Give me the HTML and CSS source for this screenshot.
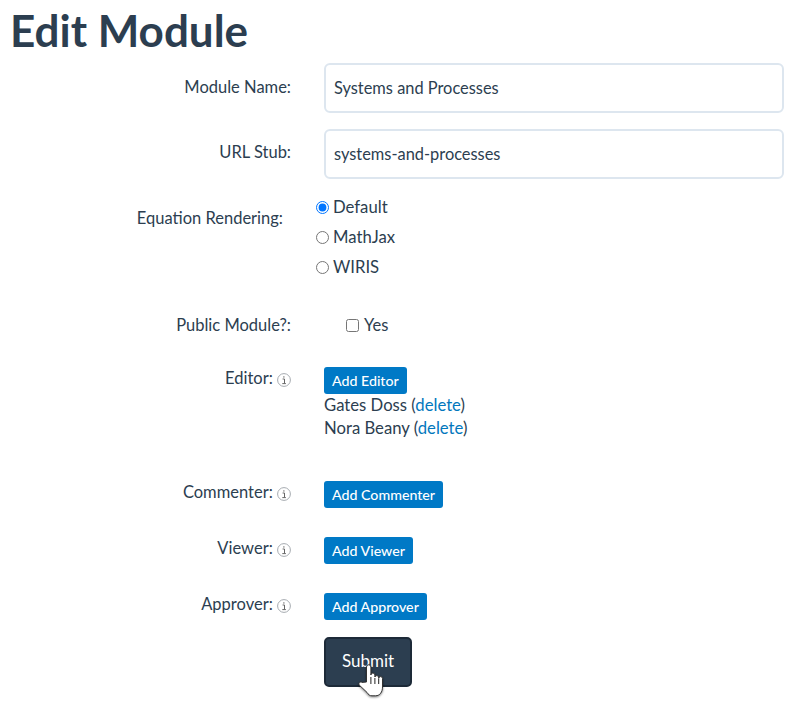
FILE: index.html
```html
<!DOCTYPE html>
<html lang="en">
<head>
    <meta charset="UTF-8">
    <meta name="viewport" content="width=device-width, initial-scale=1.0">
    <title>Edit Module</title>
    <link rel="stylesheet" href="styles.css">
</head>
<body>
    <h1>Edit Module</h1>
    <form class="module-form">
        <div class="row row-name">
            <label class="row-label">Module Name:</label>
            <div class="row-field"><input class="text-input" type="text" value="Systems and Processes"></div>
        </div>
        <div class="row row-stub">
            <label class="row-label">URL Stub:</label>
            <div class="row-field"><input class="text-input" type="text" value="systems-and-processes"></div>
        </div>
        <div class="row row-render">
            <label class="row-label">Equation Rendering:</label>
            <div class="row-field radio-group">
                <label class="radio-item"><input type="radio" name="render" checked>Default</label>
                <label class="radio-item"><input type="radio" name="render">MathJax</label>
                <label class="radio-item"><input type="radio" name="render">WIRIS</label>
            </div>
        </div>
        <div class="row row-public">
            <label class="row-label">Public Module?:</label>
            <div class="row-field"><label class="check-item"><input type="checkbox">Yes</label></div>
        </div>
        <div class="row row-editor">
            <label class="row-label">Editor:
                <svg class="info-icon" viewBox="0 0 14 14"><circle cx="7" cy="7" r="6.4"/><path d="M5.6 6h1.900v4.400M5.300 10.600h3.600M6.900 3.200v1.500"/></svg>
            </label>
            <div class="row-field">
                <a class="add-btn" href="#">Add Editor</a>
                <div class="people">
                    <div class="person">Gates Doss (<a href="#">delete</a>)</div>
                    <div class="person">Nora Beany (<a href="#">delete</a>)</div>
                </div>
            </div>
        </div>
        <div class="row row-commenter">
            <label class="row-label">Commenter:
                <svg class="info-icon" viewBox="0 0 14 14"><circle cx="7" cy="7" r="6.4"/><path d="M5.6 6h1.900v4.400M5.300 10.600h3.600M6.900 3.200v1.500"/></svg>
            </label>
            <div class="row-field"><a class="add-btn" href="#">Add Commenter</a></div>
        </div>
        <div class="row row-viewer">
            <label class="row-label">Viewer:
                <svg class="info-icon" viewBox="0 0 14 14"><circle cx="7" cy="7" r="6.4"/><path d="M5.6 6h1.900v4.400M5.300 10.600h3.600M6.900 3.200v1.500"/></svg>
            </label>
            <div class="row-field"><a class="add-btn" href="#">Add Viewer</a></div>
        </div>
        <div class="row row-approver">
            <label class="row-label">Approver:
                <svg class="info-icon" viewBox="0 0 14 14"><circle cx="7" cy="7" r="6.4"/><path d="M5.6 6h1.900v4.400M5.300 10.600h3.600M6.900 3.200v1.500"/></svg>
            </label>
            <div class="row-field"><a class="add-btn" href="#">Add Approver</a></div>
        </div>
        <div class="row">
            <div class="row-label"></div>
            <div class="row-field submit-wrap">
                <button class="submit-btn" type="button">Submit</button>
                <!-- mouse pointer sitting on the button -->
                <svg class="hand-cursor" viewBox="0 0 28 35">
                    <path class="hand-fill" d="M10.500 19V4a2.200 2.200 0 0 1 4.400 0V12a2 2 0 0 1 4 0V14a2 2 0 0 1 3.800 0V15.500a1.900 1.900 0 0 1 3.800 0V24c0 5-2.600 8.800-7 8.800h-3.500c-2.400 0-3.600-1.200-5-3.400L3.200 22c-1.100-1.800 1-3.800 2.800-2.600z"/>
                    <path class="hand-line" d="M14.900 14v7M18.900 15v6M22.700 16v5"/>
                </svg>
            </div>
        </div>
    </form>
</body>
</html>
```

FILE: styles.css
```css
body {
    margin: 0;
    font-family: Lato, "Open Sans", sans-serif;
    font-size: 16.5px;
    line-height: 23px;
    color: #2c3e50;
    background: white;
}
h1 {
    margin: 0;
    padding: 4px 0 0 10px;
    height: 59px;
    font-size: 44px;
    line-height: 52px;
    font-weight: 700;
}
.module-form {
    padding-bottom: 17px;
}
/* Form rows, label column on the left */
.row {
    display: grid;
    grid-template-columns: 291px 460px;
    column-gap: 33px;
}
.row-label {
    text-align: right;
}
.row-name {
    margin-bottom: 16px;
}
.row-name .row-label {
    padding-top: 13px;
}
.row-stub {
    margin-bottom: 13px;
}
.row-stub .row-label {
    padding-top: 12px;
}
.row-render {
    margin-bottom: 28px;
}
.row-render .row-label {
    padding: 15px 8px 0 0;
}
.row-public {
    margin-bottom: 27px;
}
.row-public .row-label {
    padding-top: 4px;
}
.row-editor {
    margin-bottom: 41px;
}
.row-commenter, .row-viewer {
    margin-bottom: 29px;
}
.row-approver {
    margin-bottom: 17px;
}
.text-input {
    display: block;
    box-sizing: border-box;
    width: 460px;
    height: 50px;
    padding: 0 8px 2px;
    border: 2px solid #dde6ef;
    border-radius: 6px;
    font-family: inherit;
    font-size: 16.4px;
    color: #2c3e50;
}
.radio-group {
    margin-left: -8px;
    font-size: 16.7px;
}
.radio-item {
    display: flex;
    align-items: center;
    height: 30px;
}
.radio-item input {
    margin: 0 4px 0 0;
}
.check-item {
    display: flex;
    align-items: center;
    height: 30px;
    margin-left: 22px;
}
.check-item input {
    margin: 0 5px 0 0;
}
.info-icon {
    width: 14px;
    height: 14px;
    vertical-align: -3px;
    fill: none;
    stroke: #a6abb0;
    stroke-width: 1;
}
.info-icon path {
    stroke: #666;
}
.add-btn {
    display: inline-block;
    height: 27px;
    padding: 0 8px;
    background-color: #0079c6;
    border-radius: 3px;
    color: white;
    font-size: 14.2px;
    font-weight: 500;
    line-height: 28px;
    text-decoration: none;
    vertical-align: top;
}
.people {
    font-size: 16.7px;
}
.person {
    height: 23px;
}
.person a {
    color: #0277bd;
    text-decoration: none;
}
.submit-wrap {
    position: relative;
}
.submit-btn {
    display: block;
    width: 88px;
    height: 50px;
    padding: 0 0 4px;
    background-color: #2c3e50;
    border: 2px solid #1d2a38;
    border-radius: 5px;
    color: white;
    font-family: inherit;
    font-size: 17px;
}
.hand-cursor {
    position: absolute;
    left: 32px;
    top: 26px;
    z-index: 2;
    width: 28px;
    height: 35px;
    overflow: visible;
    filter: drop-shadow(0 1px 1px rgba(0, 0, 0, 0.5));
}
.hand-fill {
    fill: white;
    stroke: #333;
    stroke-width: 1;
}
.hand-line {
    fill: none;
    stroke: #222;
    stroke-width: 1;
}
```
